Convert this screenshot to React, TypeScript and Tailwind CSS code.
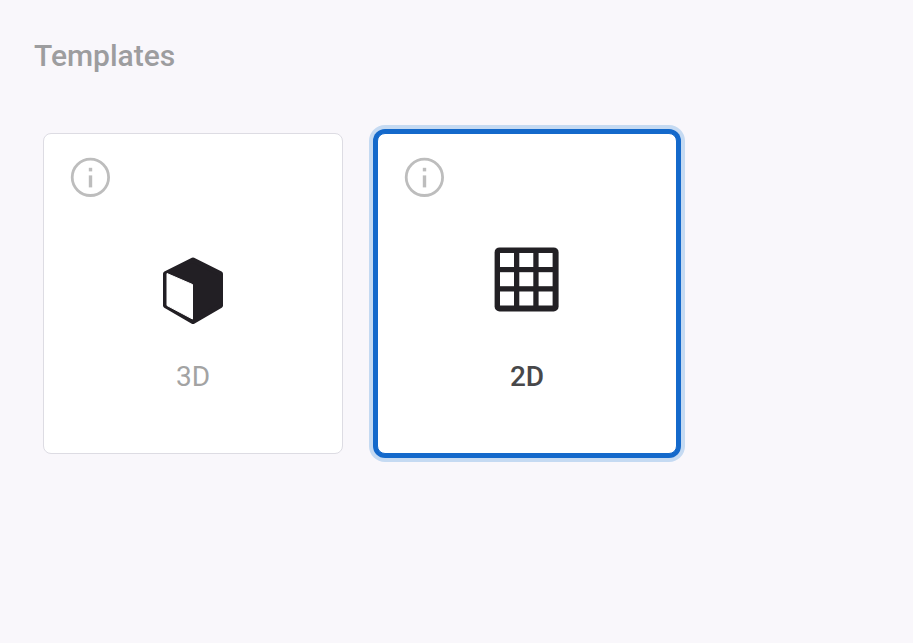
import { useState } from "react";
import type { ReactNode } from "react";

function InfoIcon() {
  return (
    <svg viewBox="0 0 40 40" className="block size-10" fill="none" aria-hidden="true">
      <circle cx="20.4" cy="20.3" r="18.2" stroke="#bdbdbd" strokeWidth="2.8" />
      <rect x="18.8" y="10.8" width="3.4" height="3.6" fill="#bdbdbd" />
      <rect x="18.8" y="18.4" width="3.4" height="12" fill="#bdbdbd" />
    </svg>
  );
}

function CubeIcon() {
  return (
    <svg viewBox="0 0 80 80" className="block size-20" aria-hidden="true">
      <path
        d="M40 15 L67.5 28.8 V60.6 L40 76.5 L12.5 60.6 V28.8 Z"
        fill="#221f24"
        stroke="#221f24"
        strokeWidth="5"
        strokeLinejoin="round"
      />
      <path
        d="M14 28.5 L39.5 39.5 V74 L14 60.5 Z"
        fill="#fff"
        stroke="#fff"
        strokeWidth="1"
        strokeLinejoin="round"
      />
    </svg>
  );
}

function GridIcon() {
  return (
    <svg viewBox="0 0 80 80" className="block size-20" aria-hidden="true">
      <rect x="7.6" y="2.4" width="64" height="64" rx="5" fill="#222024" />
      {[13, 32.3, 51.6].map((x) =>
        [8, 27.2, 46.5].map((y) => (
          <rect key={`${x}-${y}`} x={x} y={y} width="14" height="14" fill="#fff" />
        )),
      )}
    </svg>
  );
}

type Template = { id: string; icon: ReactNode };

const templates: Template[] = [
  { id: "3D", icon: <CubeIcon /> },
  { id: "2D", icon: <GridIcon /> },
];

export default function App() {
  const [selected, setSelected] = useState("2D");

  return (
    <main className="min-h-screen bg-[#f9f7fb] px-[34px] pt-9 font-['Roboto',sans-serif]">
      <h1 id="templates-title" className="text-[30px] leading-10 font-medium text-[#9d9d9f]">
        Templates
      </h1>
      <div
        role="radiogroup"
        aria-labelledby="templates-title"
        className="mt-[57px] flex flex-wrap gap-[34px] px-[9px]"
      >
        {templates.map(({ id, icon }) => (
          <div
            key={id}
            className="flex w-[300px] flex-col rounded-lg border border-[#dddce3] bg-white px-[26px] pt-[23px] pb-14 has-checked:border-[#1469cb] has-checked:shadow-[0_0_0_4px_#1469cb,0_0_0_8px_#c5daf2]"
          >
            <button type="button" aria-label={`About ${id}`} className="self-start rounded-full">
              <InfoIcon />
            </button>
            <label
              htmlFor={`template-${id}`}
              className="mt-12 flex cursor-pointer flex-col items-center text-[#a3a3a3] has-checked:font-medium has-checked:text-[#48484a]"
            >
              <input
                id={`template-${id}`}
                type="radio"
                name="template"
                className="sr-only"
                checked={selected === id}
                onChange={() => setSelected(id)}
              />
              {icon}
              <span className="mt-8 text-[28px] leading-10">{id}</span>
            </label>
          </div>
        ))}
      </div>
    </main>
  );
}
